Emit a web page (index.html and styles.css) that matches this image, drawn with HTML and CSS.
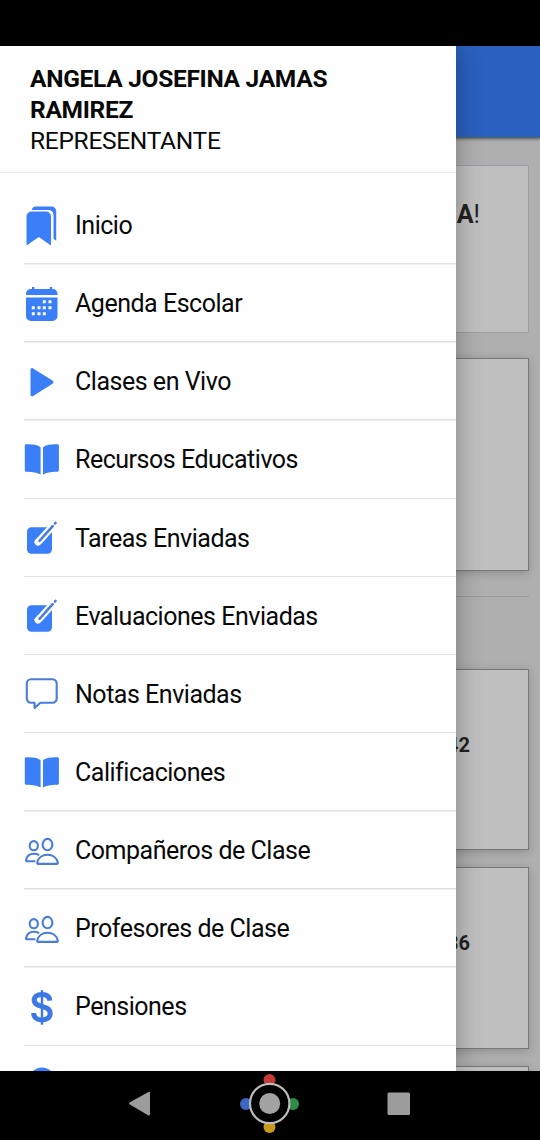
FILE: index.html
```html
<!DOCTYPE html>
<html lang="es">
<head>
<meta charset="utf-8">
<title>Menú</title>
<link rel="stylesheet" href="styles.css">
</head>
<body>
<svg class="defs" width="0" height="0">
  <symbol id="bookmarks" viewBox="0 0 40 40"><path d="M4.500 10.500a5 5 0 0 1 5-5h14.500a5 5 0 0 1 5 5V39.500L16.800 31 4.500 39.500z"/><path d="M9.700 4a4.500 4.500 0 0 1 4-3.400h16a4.500 4.500 0 0 1 4.500 4.500v29.600l-2.700-1.900V9a5 5 0 0 0-5-5z"/></symbol>
  <symbol id="calendar" viewBox="0 0 40 40"><path d="M4 11V9.500a4.500 4.500 0 0 1 4.500-4.400H10V3h2.400v2.100h15.400V3h2.400v2.100H31a4.500 4.500 0 0 1 4.500 4.400V11zM4 13.500h31.500V32a5 5 0 0 1-5 5H9a5 5 0 0 1-5-5z"/><path class="paper" d="M20.800 16.300h3v3h-3zM26.500 16.300h3v3h-3zM9.800 22.300h3v3h-3zM15.500 22.300h3v3h-3zM20.800 22.300h3v3h-3zM26.500 22.300h3v3h-3zM9.800 28.300h3v3h-3zM15.500 28.300h3v3h-3zM20.800 28.300h3v3h-3z"/></symbol>
  <symbol id="play" viewBox="0 0 40 40"><path d="M8.500 8c0-1.600 1.300-2.400 2.600-1.600l19.400 12.100c1.300.9 1.300 2.300 0 3.200L11.100 34c-1.300.8-2.600 0-2.600-1.600z"/></symbol>
  <symbol id="book" viewBox="0 0 40 40"><path d="M18.600 7.200v27.300C14.600 32.300 9.500 31.600 4.300 31.800c-.9 0-1.500-.6-1.500-1.500V5.700c0-.8.700-1.400 1.500-1.400 5.500-.2 11 .3 14.300 2.900zM21 7.200v27.300c3.800-2.200 8.900-2.900 14.400-2.700.9 0 1.500-.6 1.500-1.500V5.700c0-.8-.7-1.400-1.500-1.400-5.500-.2-11 .3-14.400 2.900z"/></symbol>
  <symbol id="edit" viewBox="0 0 40 40"><rect x="5" y="9.300" width="25" height="26.500" rx="4.500"/><path class="halo" d="M32.500 6 18.500 21.500l-2.500 2.500"/><path class="pen" d="M30.700 8.200 17.500 22.800"/><path class="pen" d="m33 5.500.6-.6"/></symbol>
  <symbol id="chat" viewBox="0 0 40 40"><path class="line" d="M9 5.300h21.500a4.200 4.200 0 0 1 4.200 4.200v15a4.200 4.200 0 0 1-4.200 4.200H18.300L12.600 34v-5.300H9a4.200 4.200 0 0 1-4.200-4.200v-15A4.200 4.200 0 0 1 9 5.300z"/></symbol>
  <symbol id="people" viewBox="0 0 40 40"><g class="line"><ellipse cx="25.500" cy="13.600" rx="4.900" ry="5.700"/><ellipse cx="11.800" cy="14.700" rx="4.100" ry="4.600"/><path d="M25.500 23.800c-5 0-9.300 3-10.300 7.900-.1.700.3 1.200 1 1.200h18.600c.7 0 1.100-.5 1-1.200-1-4.900-5.300-7.900-10.300-7.900zM17.200 24.100c-1.700-1-3.600-1.300-5.500-1.300-4 0-6.900 2.400-7.600 6.400-.1.700.2 1 .8 1h8.500"/></g></symbol>
  <symbol id="dollar" viewBox="0 0 40 40"><path class="money" d="M27.800 13.600c-.2-4-3-6.200-7.900-6.200-4.800 0-7.700 2.200-7.700 5.700 0 8.600 16 4 16 13.500 0 4-3.300 6.300-8.300 6.300-5.200 0-8.200-2.500-8.200-7"/><path class="bar" d="M20 3.200v34.500"/></symbol>
  <symbol id="disc" viewBox="0 0 40 40"><circle cx="20" cy="16" r="13.500"/></symbol>
</svg>
<div class="screen">
  <div class="status"></div>
  <div class="app">
    <main class="page">
      <div class="toolbar"></div>
      <section class="card welcome"><p><b>A</b>!</p></section>
      <section class="card banner"></section>
      <div class="rule"></div>
      <section class="card stat first">42</section>
      <section class="card stat second">36</section>
      <section class="card stat third"></section>
    </main>
    <aside class="drawer">
      <header class="user"><b>ANGELA JOSEFINA JAMAS<br>RAMIREZ</b><br><span class="role">REPRESENTANTE</span></header>
      <nav class="menu">
        <a class="item"><svg><use href="#bookmarks"/></svg><span>Inicio</span></a>
        <a class="item"><svg><use href="#calendar"/></svg><span>Agenda Escolar</span></a>
        <a class="item"><svg><use href="#play"/></svg><span>Clases en Vivo</span></a>
        <a class="item"><svg><use href="#book"/></svg><span>Recursos Educativos</span></a>
        <a class="item"><svg><use href="#edit"/></svg><span>Tareas Enviadas</span></a>
        <a class="item"><svg><use href="#edit"/></svg><span>Evaluaciones Enviadas</span></a>
        <a class="item"><svg><use href="#chat"/></svg><span>Notas Enviadas</span></a>
        <a class="item"><svg><use href="#book"/></svg><span>Calificaciones</span></a>
        <a class="item"><svg><use href="#people"/></svg><span>Compañeros de Clase</span></a>
        <a class="item"><svg><use href="#people"/></svg><span>Profesores de Clase</span></a>
        <a class="item"><svg><use href="#dollar"/></svg><span>Pensiones</span></a>
        <a class="item"><svg><use href="#disc"/></svg></a>
      </nav>
    </aside>
  </div>
  <footer class="system">
    <svg width="540" height="69" viewBox="0 0 540 69">
      <path fill="#9c9c9c" d="M129.500 31.500 148 21.200q2-1 2 1v21q0 2-2 1l-18.500-11q-1-.9 0-1.700z"/>
      <circle cx="269.500" cy="9" r="6" fill="#c43a36"/><circle cx="246" cy="33" r="6" fill="#3a67c4"/>
      <circle cx="293" cy="33" r="6" fill="#2c8c48"/><circle cx="269.500" cy="56" r="6" fill="#c79a1c"/>
      <circle cx="269.700" cy="32.500" r="19.700" fill="#000" stroke="#bdbdbd" stroke-width="2.200"/>
      <circle cx="269.700" cy="32.500" r="10.500" fill="#a3a3a3"/>
      <rect x="387.500" y="21.500" width="22.500" height="22.500" rx="1.500" fill="#9c9c9c"/>
    </svg>
  </footer>
</div>
</body>
</html>
```
FILE: styles.css
```css
* { box-sizing: border-box; }
body { margin: 0; font-family: Roboto, sans-serif; color: #090909; }
.defs { display: block; }
.screen { width: 540px; height: 1140px; display: flex; flex-direction: column; overflow: hidden; background: #000; }
.status { height: 46px; flex: none; }
.app { height: 1025px; flex: none; position: relative; overflow: hidden; }
.page { height: 100%; background: #afafaf; display: flex; flex-direction: column; }
.toolbar { height: 92px; flex: none; background: #2a60bf; border-bottom: 1px solid #4f6668; box-shadow: 0 1px 3px rgba(0, 0, 0, .5); }
.card { flex: none; margin: 0 11px; background: #bfbfbf; border: 1px solid #777; box-shadow: 0 2px 9px rgba(0, 0, 0, .2); }
.welcome { height: 168px; margin-top: 27px; border-color: #9c9ca3; box-shadow: none; padding: 34px 48px 0 0; text-align: right; font-size: 25px; color: #222; }
.welcome p { margin: 0; line-height: 30px; }
.banner { height: 213px; margin-top: 25px; }
.rule { height: 1px; flex: none; margin: 25px 11px 0; background: #9a9a9a; }
.stat { padding: 62px 58px 0 0; text-align: right; font-size: 20px; line-height: 26px; font-weight: 700; color: #222; }
.first { height: 181px; margin-top: 72px; }
.second { height: 182px; margin-top: 17px; }
.third { height: 180px; margin-top: 17px; }
.drawer { position: absolute; top: 0; left: 0; width: 456px; height: 100%; overflow: hidden; background: #fefefe; box-shadow: 2px 0 22px rgba(0, 0, 0, .28); }
.user { height: 127px; padding: 17px 30px 0; border-bottom: 1px solid #ececec; font-size: 24.5px; line-height: 31px; letter-spacing: -.3px; }
.menu { padding-top: 13.500px; }
.item { height: 78.15px; display: flex; align-items: center; margin-left: 22px; gap: 13px; font-size: 25px; letter-spacing: -.48px; background: linear-gradient(#e2e2e2, #e2e2e2) 2px 100% / 100% 1.500px no-repeat; }
.item svg { width: 40px; height: 40px; flex: none; fill: #3b7ff8; }
.paper { fill: #fefefe; }
.halo { fill: none; stroke: #fefefe; stroke-width: 7px; stroke-linecap: round; }
.pen { fill: none; stroke: #4a7cda; stroke-width: 2.500px; stroke-linecap: round; }
.line { fill: none; stroke: #4a7ddb; stroke-width: 2.100px; stroke-linejoin: round; }
.money { fill: none; stroke: #3d78e4; stroke-width: 5px; }
.bar { fill: none; stroke: #3d78e4; stroke-width: 2.400px; }
.system { height: 69px; flex: none; background: #000; }
.system svg { display: block; }
```
